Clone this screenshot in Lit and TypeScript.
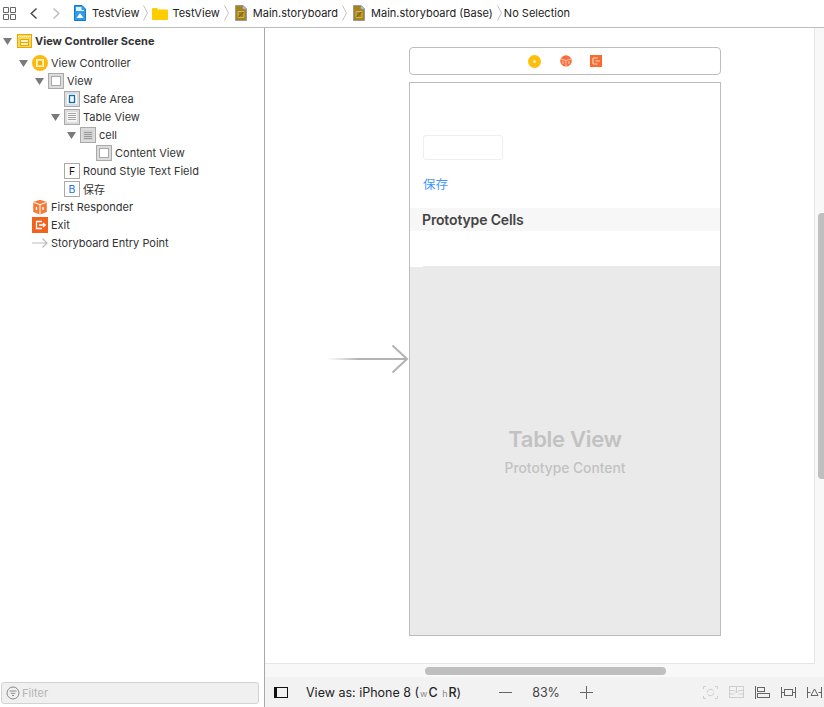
import { LitElement, html, css, svg } from "lit";
import { customElement } from "lit/decorators.js";

const box = (inner: unknown, fill = "#dcdcdc", border = "#a9a9a9") => svg`
  <svg width="16" height="16" viewBox="0 0 16 16">
    <rect x="0.5" y="0.5" width="15" height="15" fill="${fill}" stroke="${border}"/>
    ${inner}
  </svg>`;

const ICONS: Record<string, unknown> = {
  scene: svg`<svg width="16" height="16" viewBox="0 0 16 16">
    <rect x="1.500" y="1.500" width="14" height="13" fill="#ffd65c" stroke="#e9a800"/>
    <path d="M2 3.500h13" stroke="#fff" stroke-dasharray="1 1"/>
    <rect x="4.500" y="6.500" width="8" height="6" fill="#fff3c4" stroke="#e9a800"/>
    <path d="M5 9.500h7" stroke="#e9a800"/>
  </svg>`,
  controller: svg`<svg width="16" height="16" viewBox="0 0 16 16">
    <circle cx="8" cy="8" r="8" fill="#fcb90f"/>
    <rect x="4.500" y="4.500" width="7" height="7" fill="#ffe28f" stroke="#fff2c6"/>
    <rect x="6" y="6" width="4" height="4" fill="#f5b000"/>
  </svg>`,
  view: box(svg`<rect x="3.500" y="3.500" width="9" height="9" fill="#fff" stroke="#a9a9a9"/>`),
  safe: box(svg`<rect x="3" y="3" width="10" height="10" fill="#fff"/><rect x="5.500" y="4.500" width="5" height="7" fill="#fff" stroke="#0f6fb8" stroke-width="1.400"/>`),
  table: box(svg`<rect x="3" y="3" width="10" height="10" fill="#f6f6f6"/><path d="M4 4.500h8M4 6.500h8M4 8.500h8M4 10.500h8" stroke="#a5a5a5"/>`),
  cell: box(svg`<rect x="3" y="3" width="10" height="10" fill="#d2d2d2"/><path d="M4 5.500h8M4 7.500h8M4 9.500h8M4 11.500h8" stroke="#999"/>`),
  field: box(svg`<text x="8" y="12" text-anchor="middle" font-family="Inter, sans-serif" font-size="10.500" fill="#111">F</text>`, "#fff"),
  button: box(svg`<text x="8" y="12" text-anchor="middle" font-family="Inter, sans-serif" font-size="10.500" fill="#1c6ff2">B</text>`, "#fff"),
  responder: svg`<svg width="16" height="16" viewBox="0 0 16 16">
    <path d="M8 .8 14.800 3v10L8 15.600 1.200 13V3z" fill="#f47b36"/>
    <path d="M1.500 3.400 8 5.600l6.500-2.200M8 5.600v10" stroke="#fff" fill="none"/>
    <path d="M4.500 8v3M11 8v3" stroke="#fff" stroke-width="1.300"/>
  </svg>`,
  exit: svg`<svg width="16" height="16" viewBox="0 0 16 16">
    <rect width="16" height="16" fill="#f0621e"/>
    <path d="M10 4.500H4.500v7H10" stroke="#fff" stroke-width="1.300" fill="none"/>
    <path d="M7 8h6M11 6l2.200 2-2.200 2" stroke="#fff" stroke-width="1.300" fill="none"/>
  </svg>`,
  entry: svg`<svg width="16" height="16" viewBox="0 0 16 16">
    <path d="M0 8h15M10.500 3.500 15 8l-4.500 4.500" stroke="#bcbcbc" stroke-width="1.200" fill="none"/>
  </svg>`,
};

type Row = { depth: number; icon: string; label: string; open?: boolean; bold?: boolean };

const ROWS: Row[] = [
  { depth: 0, icon: "scene", label: "View Controller Scene", open: true, bold: true },
  { depth: 1, icon: "controller", label: "View Controller", open: true },
  { depth: 2, icon: "view", label: "View", open: true },
  { depth: 3, icon: "safe", label: "Safe Area" },
  { depth: 3, icon: "table", label: "Table View", open: true },
  { depth: 4, icon: "cell", label: "cell", open: true },
  { depth: 5, icon: "view", label: "Content View" },
  { depth: 3, icon: "field", label: "Round Style Text Field" },
  { depth: 3, icon: "button", label: "保存" },
  { depth: 1, icon: "responder", label: "First Responder" },
  { depth: 1, icon: "exit", label: "Exit" },
  { depth: 1, icon: "entry", label: "Storyboard Entry Point" },
];

const sourceIcon = svg`
  <svg width="12" height="16" viewBox="0 0 12 16">
    <path d="M.5.500h7.500l3.500 3.500v11.500H.5z" fill="#2c9cf0" stroke="#1878c8"/>
    <path d="M2 2h5.500v3H10v1H2z" fill="#e3f3ff"/>
    <path d="M2.500 13h7L6 8z" fill="#fff"/>
  </svg>`;

const storyboardIcon = svg`
  <svg class="doc" width="12" height="16" viewBox="0 0 12 16">
    <path d="M.5.500h7.500l3.500 3.500v11.500H.5z" fill="#a5841a" stroke="#9a9a9a"/>
    <path d="M8 .5v3.500h3.500z" fill="#e4e4e4" stroke="#9a9a9a"/>
    <path d="M3 6.500h6v6H3z" fill="none" stroke="#d8c27a" stroke-width=".8"/>
    <path d="m3.500 12 5-5" stroke="#6b5408" stroke-width="1"/>
  </svg>`;

const chevron = svg`<svg class="chev" width="5" height="16" viewBox="0 0 5 16"><path d="M.5.500 4.500 8 .5 15.500" fill="none" stroke="#c2c2c2"/></svg>`;

@customElement("app-root")
export class AppRoot extends LitElement {
  static styles = css`
    :host {
      display: flex;
      flex-direction: column;
      width: 824px;
      height: 707px;
      overflow: hidden;
      background: #fff;
      color: #2b2b2b;
      font-family: Inter, "Noto Sans CJK SC", sans-serif;
      font-size: 11px;
    }
    svg {
      display: block;
      flex: none;
    }
    .crumbs {
      flex: none;
      height: 28px;
      box-sizing: border-box;
      border-bottom: 1px solid #bdbdbd;
      display: flex;
      align-items: center;
      padding: 0 0 1px 3px;
      color: #222;
    }
    .grid {
      margin-right: 14px;
    }
    .back {
      margin-right: 16px;
    }
    .forward {
      margin-right: 14px;
    }
    .crumb {
      display: flex;
      align-items: center;
      gap: 6px;
      white-space: nowrap;
    }
    .crumb.folder {
      gap: 4px;
    }
    .selection {
      margin-left: -2px;
    }
    .doc {
      margin-left: 2px;
    }
    .chev {
      margin: 0 4px;
    }
    .body {
      flex: 1;
      display: flex;
      min-height: 0;
    }
    .side {
      flex: none;
      width: 264px;
      box-sizing: border-box;
      display: flex;
      flex-direction: column;
      padding-top: 4px;
    }
    .tree {
      flex: 1;
    }
    .row {
      height: 18px;
      display: flex;
      align-items: center;
      white-space: nowrap;
      color: #333;
    }
    .row span:last-child {
      margin-left: 3px;
    }
    .row.scene {
      margin-bottom: 4px;
      font-weight: 700;
    }
    .twist {
      width: 16px;
      box-sizing: border-box;
      padding-left: 3px;
      flex: none;
    }
    .filter {
      flex: none;
      margin: 0 5px 3px 1px;
      height: 22px;
      box-sizing: border-box;
      background: #f0f0f0;
      border: 1px solid #d2d2d2;
      border-radius: 3px;
      display: flex;
      align-items: center;
      gap: 2px;
      padding-left: 4px;
      color: #b4b4b4;
    }
    .main {
      flex: 1;
      min-width: 0;
      border-left: 1px solid #a8a8a8;
      display: flex;
      flex-direction: column;
      position: relative;
    }
    .canvas-wrap {
      flex: 1;
      background: #f8f8f8;
      padding: 0 9px 13px 0;
      display: flex;
      min-height: 0;
    }
    .canvas {
      flex: 1;
      background: #fff;
      border-right: 1px solid #e6e6e6;
      border-bottom: 1px solid #e6e6e6;
      position: relative;
    }
    .dock {
      position: absolute;
      left: 144px;
      top: 19px;
      width: 312px;
      height: 28px;
      box-sizing: border-box;
      border: 1px solid #bdbdbd;
      border-radius: 4px;
      display: flex;
      justify-content: center;
      align-items: center;
      gap: 18px;
      background: #fff;
    }
    .scene-box {
      position: absolute;
      left: 144px;
      top: 54px;
      width: 312px;
      height: 554px;
      box-sizing: border-box;
      border: 1px solid #bdbdbd;
      display: flex;
      flex-direction: column;
    }
    .top-area {
      flex: none;
      height: 125px;
      box-sizing: border-box;
      padding: 52px 0 0 13px;
    }
    .input {
      width: 80px;
      height: 25px;
      box-sizing: border-box;
      border: 1px solid #eeeeee;
      border-radius: 3px;
    }
    .save {
      margin-top: 16px;
      color: #3f97fb;
      font-size: 12.500px;
      line-height: 18px;
    }
    .section {
      flex: none;
      height: 23px;
      background: #f7f7f7;
      padding-left: 12px;
      font-size: 14px;
      line-height: 23px;
      font-weight: 600;
      letter-spacing: -0.15px;
      color: #444;
    }
    .cell {
      flex: none;
      height: 36px;
      display: flex;
      align-items: flex-end;
      padding-left: 13px;
    }
    .cell::after {
      content: "";
      flex: 1;
      height: 1px;
      background: #eaeaea;
    }
    .content {
      flex: 1;
      background: #eaeaea;
      display: flex;
      flex-direction: column;
      align-items: center;
      padding-top: 157px;
      color: #c2c2c2;
    }
    .content b {
      font-size: 22px;
      line-height: 30px;
      font-weight: 600;
      letter-spacing: -0.3px;
    }
    .content span {
      margin-top: 6px;
      font-size: 13.800px;
      line-height: 16px;
      font-weight: 500;
    }
    .arrow {
      position: absolute;
      left: 62px;
      top: 316px;
    }
    .hbar {
      position: absolute;
      left: 160px;
      top: 639px;
      width: 241px;
      height: 8px;
      border-radius: 4px;
      background: #bfbfbf;
    }
    .vbar {
      position: absolute;
      left: 553px;
      top: 185px;
      width: 6px;
      height: 266px;
      border-radius: 4px 0 0 4px;
      background: #bfbfbf;
    }
    .status {
      flex: none;
      height: 30px;
      background: #f2f2f2;
      display: flex;
      align-items: center;
      padding-left: 9px;
      font-size: 12.500px;
      color: #222;
      white-space: nowrap;
    }
    .view-as {
      margin-left: 18px;
    }
    .view-as small {
      font-size: 9px;
      color: #8a8a8a;
      margin-left: 1px;
    }
    .view-as small + strong {
      margin-left: 1px;
    }
    .view-as strong {
      font-weight: 500;
    }
    .zoom {
      display: flex;
      align-items: center;
      margin-left: 38px;
      color: #444;
      gap: 20px;
    }
    .tools {
      margin-left: auto;
      display: flex;
      align-items: center;
      gap: 11px;
      margin-right: 2px;
    }
  `;

  private renderRow(r: Row) {
    return html`<div
      class="row ${r.bold ? "scene" : ""}"
      style="padding-left:${r.depth * 16}px"
    >
      <span class="twist">
        ${r.open
          ? svg`<svg width="9" height="7" viewBox="0 0 9 7"><path d="M0 0h9L4.500 7z" fill="#7a7a7a"/></svg>`
          : ""}
      </span>
      ${ICONS[r.icon]}
      <span>${r.label}</span>
    </div>`;
  }

  render() {
    return html`
      <div class="crumbs">
        <svg class="grid" width="13" height="13" viewBox="0 0 13 13" fill="none" stroke="#666">
          <path d="M.5.500h5v5h-5zM7.500.500h5v5h-5zM.5 7.500h5v5h-5zM7.500 7.500h5v5h-5z"/>
        </svg>
        <svg class="back" width="7" height="11" viewBox="0 0 7 11" fill="none" stroke="#444" stroke-width="1.400">
          <path d="M6.500.5 1.200 5.500l5.300 5"/>
        </svg>
        <svg class="forward" width="7" height="11" viewBox="0 0 7 11" fill="none" stroke="#bbb" stroke-width="1.400">
          <path d="M.5.5 5.800 5.500l-5.300 5"/>
        </svg>
        <span class="crumb">${sourceIcon} TestView</span>
        ${chevron}
        <span class="crumb folder">
          <svg width="16" height="13" viewBox="0 0 16 13">
            <path d="M0 2q0-1 1-1h4l1 1.500h9q1 0 1 1V12q0 1-1 1H1q-1 0-1-1z" fill="#ffcc00"/>
          </svg>
          TestView
        </span>
        ${chevron}
        <span class="crumb">${storyboardIcon} Main.storyboard</span>
        ${chevron}
        <span class="crumb">${storyboardIcon} Main.storyboard (Base)</span>
        ${chevron}
        <span class="selection">No Selection</span>
      </div>
      <div class="body">
        <aside class="side">
          <div class="tree">${ROWS.map((r) => this.renderRow(r))}</div>
          <div class="filter">
            <svg width="14" height="14" viewBox="0 0 14 14" fill="none" stroke="#8a8a8a">
              <circle cx="7" cy="7" r="6"/>
              <path d="M3.500 5h7M4.800 7.300h4.400M6 9.500h2"/>
            </svg>
            Filter
          </div>
        </aside>
        <section class="main">
          <div class="canvas-wrap">
            <div class="canvas">
              <svg class="arrow" width="84" height="30" viewBox="0 0 84 30" fill="none">
                <defs>
                  <linearGradient id="tail">
                    <stop offset="0" stop-color="#bdbdbd" stop-opacity="0"/>
                    <stop offset="0.400" stop-color="#b3b3b3"/>
                  </linearGradient>
                </defs>
                <rect x="0" y="14" width="80" height="2" fill="url(#tail)"/>
                <path d="M65.500 1.500 80 15 65.500 28.500" stroke="#b3b3b3" stroke-width="2"/>
              </svg>
              <div class="dock">
                <svg width="13" height="13" viewBox="0 0 13 13">
                  <circle cx="6.500" cy="6.500" r="6.500" fill="#fdbe0c"/>
                  <circle cx="6.500" cy="6.500" r="1.500" fill="#fff0b8"/>
                </svg>
                <svg style="margin-left:1px" width="12" height="12" viewBox="0 0 12 12">
                  <circle cx="6" cy="6" r="5.800" fill="#f86f3e"/>
                  <path d="M1 4 6 5.500 11 4M6 5.500V12M3 6v3M9 6v3" stroke="#ffd9c8" stroke-width=".8" fill="none"/>
                </svg>
                <svg width="12" height="12" viewBox="0 0 12 12">
                  <rect width="12" height="12" fill="#fb6a2f"/>
                  <path d="M7.500 3H3v6h4.500" stroke="#ffe3d6" fill="none"/>
                  <path d="M5.500 6H10" stroke="#ffe3d6"/>
                </svg>
              </div>
              <div class="scene-box">
                <div class="top-area">
                  <div class="input"></div>
                  <div class="save">保存</div>
                </div>
                <div class="section">Prototype Cells</div>
                <div class="cell"></div>
                <div class="content">
                  <b>Table View</b>
                  <span>Prototype Content</span>
                </div>
              </div>
            </div>
          </div>
          <div class="hbar"></div>
          <div class="vbar"></div>
          <div class="status">
            <svg width="14" height="11" viewBox="0 0 14 11" fill="none" stroke="#111">
              <rect x=".5" y=".5" width="13" height="10"/>
              <rect x="1" y="1" width="2" height="9" fill="#111" stroke="none"/>
            </svg>
            <span class="view-as">View as: iPhone 8 (<small>w</small><strong>C</strong> <small>h</small><strong>R</strong>)</span>
            <div class="zoom">
              <svg width="13" height="13" viewBox="0 0 13 13" stroke="#666"><path d="M0 6.500h13"/></svg>
              <span>83%</span>
              <svg width="13" height="13" viewBox="0 0 13 13" stroke="#666"><path d="M0 6.500h13M6.500 0v13"/></svg>
            </div>
            <div class="tools">
              <svg width="15" height="13" viewBox="0 0 15 13" fill="none" stroke="#cfcfcf">
                <path d="M.5 3V.5H3M12 .5h2.500V3M.5 10v2.500H3M12 12.500h2.500V10"/>
                <path d="M4 6.500a3.500 3.500 0 0 1 6.500-1.500M11 6.500A3.500 3.500 0 0 1 4.500 8"/>
              </svg>
              <svg width="15" height="12" viewBox="0 0 15 12" fill="none" stroke="#cfcfcf">
                <rect x=".5" y=".5" width="14" height="11"/>
                <path d="M.5 4.500h5M9.500 4.500h5M.5 8h5M9.500 8h5M7.500.5v6M5.500 5l2 2 2-2"/>
              </svg>
              <svg width="15" height="13" viewBox="0 0 15 13" fill="none" stroke="#666">
                <path d="M.5 0v13"/>
                <rect x="2.500" y="1.500" width="7" height="4"/>
                <rect x="2.500" y="7.500" width="12" height="4"/>
              </svg>
              <svg width="15" height="11" viewBox="0 0 15 11" fill="none" stroke="#666">
                <path d="M.5 0v11M14.500 0v11M.5 5.500h3M11.500 5.500h3"/>
                <rect x="3.500" y="2.500" width="8" height="6"/>
              </svg>
              <svg width="15" height="11" viewBox="0 0 15 11" fill="none" stroke="#666">
                <path d="M.5 0v11M14.500 0v11M.5 5.500h3M11.500 5.500h3"/>
                <path d="M7.500 2 11 8.500H4z"/>
              </svg>
            </div>
          </div>
        </section>
      </div>
    `;
  }
}
